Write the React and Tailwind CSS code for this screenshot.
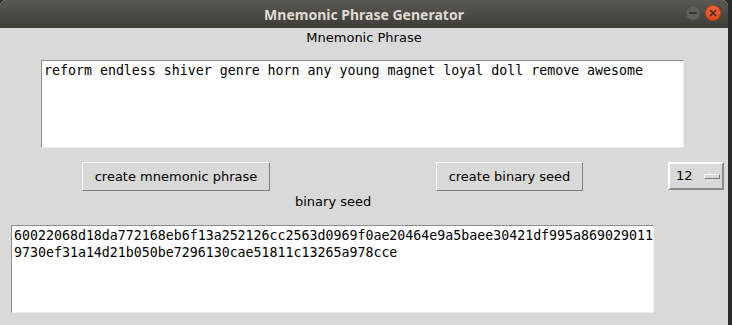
import React from "react";

const sans = { fontFamily: '"DejaVu Sans", sans-serif' };

function Raised({ className, children }) {
    return (
        <div
            className={
                "flex items-center justify-center bg-[#d9d9d9] border border-t-white border-l-white border-r-[#7f7f7f] border-b-[#7f7f7f] text-[13px] text-black " +
                className
            }
            style={sans}
        >
            {children}
        </div>
    );
}

function TextBox({ className, lines }) {
    return (
        <div
            className={
                "w-[643px] h-[88px] bg-white border border-t-[#8e8e8e] border-l-[#8e8e8e] border-r-[#ececec] border-b-[#ececec] pl-[2px] pt-[1px] text-[13.27px] leading-[17px] text-black " +
                className
            }
            style={{ fontFamily: '"DejaVu Sans Mono", monospace' }}
        >
            {lines.map((l) => (
                <div key={l} className="whitespace-pre">{l}</div>
            ))}
        </div>
    );
}

export default function App() {
    return (
        <div className="w-[732px] h-[325px] flex bg-[#2b2b2b] overflow-hidden">
            <div className="w-[728px] flex flex-col bg-[#d9d9d9] rounded-t-[6px] overflow-hidden">
                {/* title bar */}
                <div className="relative h-[28px] shrink-0 bg-linear-to-b from-[#5a5852] to-[#3e3d39] flex items-center justify-center">
                    <span className="text-[14px] font-bold text-[#dfdbd2]" style={{ fontFamily: '"Noto Sans", sans-serif' }}>
                        Mnemonic Phrase Generator
                    </span>
                    <div className="absolute right-[7px] top-[5px] flex gap-[4px]">
                        <div className="w-[16px] h-[16px] rounded-full bg-[#5f5e59] border border-[#4a4945] flex items-center justify-center">
                            <div className="w-[8px] h-[2px] bg-[#3a3936]" />
                        </div>
                        <div className="w-[16px] h-[16px] rounded-full bg-linear-to-b from-[#f0653a] to-[#df4a16] border border-[#c9400f] flex items-center justify-center">
                            <svg width="8" height="8" viewBox="0 0 8 8">
                                <path d="M1 1L7 7M7 1L1 7" stroke="#3c2a22" strokeWidth="1.5" />
                            </svg>
                        </div>
                    </div>
                </div>

                {/* body */}
                <div className="flex flex-col pt-[2px]">
                    <div className="h-[16px] leading-[16px] text-center text-[13px] text-black" style={sans}>
                        Mnemonic Phrase
                    </div>
                    <TextBox
                        className="mt-[14px] ml-[41px]"
                        lines={["reform endless shiver genre horn any young magnet loyal doll remove awesome"]}
                    />
                    <div className="flex items-start mt-[14px] h-[29px]">
                        <Raised className="ml-[82px] w-[188px] h-[29px]">create mnemonic phrase</Raised>
                        <Raised className="ml-[166px] w-[147px] h-[29px]">create binary seed</Raised>
                        <div
                            className="ml-[85px] w-[56px] h-[28px] flex items-center bg-[#d9d9d9] border-2 border-t-white border-l-white border-r-[#8a8a8a] border-b-[#8a8a8a] text-[13px] text-black"
                            style={sans}
                        >
                            <span className="ml-[6px]">12</span>
                            <div className="ml-[11px] w-[16px] h-[5px] bg-[#d9d9d9] border border-t-white border-l-white border-r-[#7a7a7a] border-b-[#7a7a7a]" />
                        </div>
                    </div>
                    <div className="mt-[3px] ml-[295px] h-[16px] leading-[16px] text-[13px] text-black" style={sans}>
                        binary seed
                    </div>
                    <TextBox
                        className="mt-[15px] ml-[11px]"
                        lines={[
                            "60022068d18da772168eb6f13a252126cc2563d0969f0ae20464e9a5baee30421df995a869029011",
                            "9730ef31a14d21b050be7296130cae51811c13265a978cce",
                        ]}
                    />
                </div>
            </div>
            <div className="w-[4px] bg-[#2b2b2b]" />
        </div>
    );
}
